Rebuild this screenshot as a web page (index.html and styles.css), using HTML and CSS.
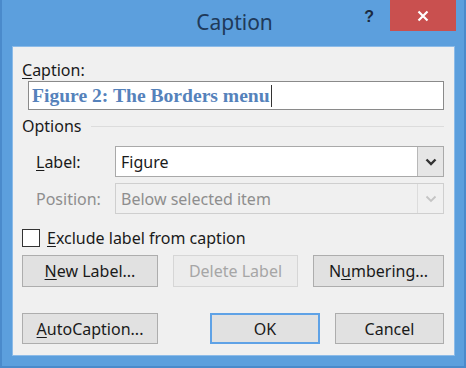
FILE: index.html
```html
<!DOCTYPE html>
<html lang="en">
<head>
    <meta charset="UTF-8">
    <title>Caption</title>
    <link rel="stylesheet" href="styles.css">
</head>
<body>
    <div class="window">
        <!-- Title bar -->
        <div class="title-bar">
            <span class="title">Caption</span>
            <span class="help">?</span>
            <span class="close">
                <svg width="12" height="12" viewBox="0 0 12 12"><path d="M1.5 1.5 L10.5 10.5 M10.5 1.5 L1.5 10.5" stroke="#fff" stroke-width="2.2"/></svg>
            </span>
        </div>

        <!-- Dialog body -->
        <div class="dialog">
            <div class="field-label"><u>C</u>aption:</div>
            <div class="caption-input"><span class="caption-text">Figure 2: The Borders menu</span><span class="cursor"></span></div>

            <div class="group-title">
                <span>Options</span>
                <span class="group-line"></span>
            </div>

            <div class="option-row">
                <span class="option-label"><u>L</u>abel:</span>
                <div class="combo">
                    <span class="combo-value">Figure</span>
                    <span class="combo-btn">
                        <svg width="12" height="8" viewBox="0 0 12 8"><path d="M1.5 1.5 L6 6 L10.5 1.5" fill="none" stroke="#333" stroke-width="2.4"/></svg>
                    </span>
                </div>
            </div>

            <div class="option-row option-row-disabled">
                <span class="option-label">Position:</span>
                <div class="combo combo-disabled">
                    <span class="combo-value">Below selected item</span>
                    <span class="combo-btn">
                        <svg width="12" height="8" viewBox="0 0 12 8"><path d="M1.5 1.5 L6 6 L10.5 1.5" fill="none" stroke="#c4c4c4" stroke-width="1.8"/></svg>
                    </span>
                </div>
            </div>

            <div class="check-row">
                <span class="checkbox"></span>
                <span><u>E</u>xclude label from caption</span>
            </div>

            <div class="button-row">
                <button class="btn btn-new"><u>N</u>ew Label...</button>
                <button class="btn btn-delete" disabled>Delete Label</button>
                <button class="btn btn-numbering">N<u>u</u>mbering...</button>
            </div>

            <div class="button-row button-row-bottom">
                <button class="btn btn-auto"><u>A</u>utoCaption...</button>
                <button class="btn btn-ok">OK</button>
                <button class="btn btn-cancel">Cancel</button>
            </div>
        </div>
    </div>
</body>
</html>
```

FILE: styles.css
```css
/* Global styles */
body {
    margin: 0;
    padding: 0;
    font-family: "Noto Sans", "Open Sans", sans-serif;
    font-size: 16px;
    color: #1a1a1a;
}

u {
    text-decoration: underline;
    text-underline-offset: 2px;
}

/* Window frame */
.window {
    width: 466px;
    height: 368px;
    box-sizing: border-box;
    background-color: #5c9fdd;
    border: 2px solid #4a8acb;
    border-top: none;
    padding: 0 9px 10px 10px;
    display: flex;
    flex-direction: column;
}

/* Title bar */
.title-bar {
    height: 46px;
    position: relative;
    display: flex;
    justify-content: center;
    align-items: flex-start;
}

.title {
    margin-top: 8px;
    font-size: 21px;
    color: #1f3a5a;
    padding-left: 2px;
}

.help {
    position: absolute;
    top: 8px;
    right: 81px;
    font-family: "Liberation Sans", sans-serif;
    font-weight: bold;
    font-size: 16px;
    color: #1a2a40;
}

.close {
    position: absolute;
    top: 0;
    right: -1px;
    width: 66px;
    height: 31px;
    background-color: #c9504f;
    display: flex;
    align-items: center;
    justify-content: center;
}

/* Dialog body */
.dialog {
    flex: 1;
    background-color: #f0f0f0;
    border: 1px solid #8cbbe8;
    padding: 12px 10px 0 9px;
    display: flex;
    flex-direction: column;
}

.field-label {
    line-height: 22px;
}

.caption-input {
    margin: 0 0 0 6px;
    height: 29px;
    box-sizing: border-box;
    border: 1px solid #8a8a8a;
    background-color: #fff;
    display: flex;
    align-items: center;
    padding-left: 3px;
}

.caption-text {
    font-family: "Liberation Serif", serif;
    font-weight: bold;
    font-size: 19.6px;
    color: #5582bb;
}

.cursor {
    width: 1px;
    height: 22px;
    background-color: #333;
    margin-left: 1px;
}

/* Options group */
.group-title {
    margin-top: 5px;
    display: flex;
    align-items: center;
    line-height: 22px;
}

.group-line {
    flex: 1;
    height: 1px;
    background-color: #dcdcdc;
    margin-left: 10px;
}

.option-row {
    margin-top: 9px;
    display: flex;
    align-items: center;
    height: 31px;
}

.option-row-disabled {
    margin-top: 6px;
    color: #8e8e8e;
}

.option-label {
    width: 93px;
    padding-left: 14px;
    box-sizing: border-box;
}

.combo {
    flex: 1;
    height: 31px;
    box-sizing: border-box;
    border: 1px solid #a9a9a9;
    background-color: #fff;
    display: flex;
    align-items: center;
}

.combo-value {
    flex: 1;
    padding-left: 5px;
}

.combo-btn {
    width: 25px;
    height: 29px;
    border-left: 1px solid #b8b8b8;
    background-color: #e6e6e6;
    display: flex;
    align-items: center;
    justify-content: center;
}

.combo-disabled {
    background-color: #f0f0f0;
    border-color: #cfcfcf;
}

.combo-disabled .combo-btn {
    background-color: #f0f0f0;
    border-left-color: #dcdcdc;
}

/* Checkbox */
.check-row {
    margin-top: 15px;
    height: 18px;
    display: flex;
    align-items: center;
    gap: 7px;
}

.checkbox {
    width: 18px;
    height: 18px;
    box-sizing: border-box;
    border: 1px solid #333;
    background-color: #fff;
}

/* Buttons */
.button-row {
    margin-top: 8px;
    display: flex;
    height: 32px;
}

.button-row-bottom {
    margin-top: 26px;
    height: 31px;
}

.btn {
    height: 100%;
    box-sizing: border-box;
    font-family: "Noto Sans", "Open Sans", sans-serif;
    font-size: 16px;
    color: #1a1a1a;
    background-color: #e1e1e1;
    border: 1px solid #adadad;
    padding: 0;
}

.btn-new,
.btn-auto {
    width: 136px;
}

.btn-delete {
    width: 125px;
    margin-left: 15px;
    background-color: #ececec;
    border-color: #d6d6d6;
    color: #a6a6a6;
}

.btn-numbering {
    width: 131px;
    margin-left: 15px;
}

.btn-ok {
    width: 110px;
    margin-left: 52px;
    border: 2px solid #5fa2e6;
}

.btn-cancel {
    width: 109px;
    margin-left: 15px;
}
```
